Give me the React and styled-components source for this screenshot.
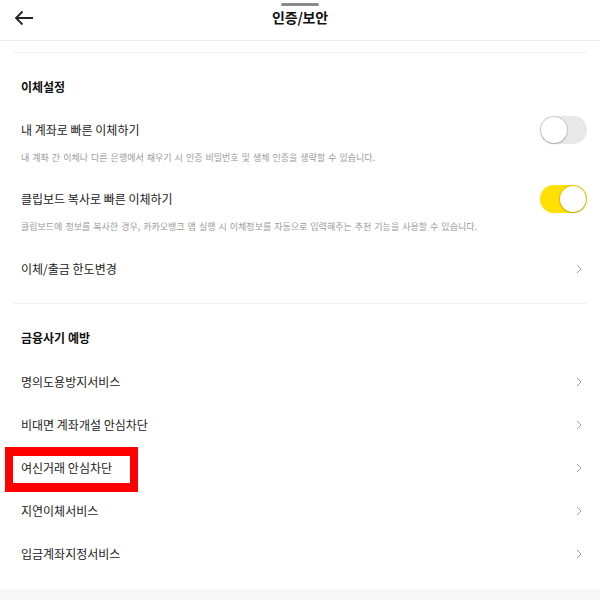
import React from "react";
import styled, { createGlobalStyle } from "styled-components";

const Global = createGlobalStyle`
  html, body { margin: 0; padding: 0; background: #fff; }
  body { font-family: "Noto Sans CJK KR", "Noto Sans", sans-serif; color: #222; }
  * { box-sizing: border-box; }
`;

const Page = styled.div`
  width: 600px;
  height: 600px;
  overflow: hidden;
  display: flex;
  flex-direction: column;
  background: #fff;
`;

const Header = styled.header`
  position: relative;
  height: 41px;
  flex: none;
  display: flex;
  align-items: center;
  justify-content: center;
  border-bottom: 1px solid #eeeeee;
`;

const Handle = styled.div`
  position: absolute;
  top: 3px;
  left: 281px;
  width: 38px;
  height: 3px;
  border-radius: 2px;
  background: #8a8a8a;
`;

const BackButton = styled.button`
  position: absolute;
  left: 12px;
  top: 7px;
  width: 24px;
  height: 22px;
  padding: 0;
  border: 0;
  background: none;
  display: flex;
  align-items: center;
  justify-content: center;
`;

const Title = styled.h1`
  margin: 0;
  margin-top: -6px;
  font-size: 14px;
  font-weight: 700;
  color: #111;
  letter-spacing: -0.2px;
`;

const Content = styled.main`
  flex: 1;
  padding: 0 13px;
`;

const Divider = styled.hr`
  margin: ${(p) => p.$top}px 0 0;
  border: 0;
  height: 1px;
  background: #f0f0f0;
`;

const SectionTitle = styled.h2`
  margin: 0;
  padding: 20px 8px 0;
  height: 48px;
  line-height: 28px;
  font-size: 12px;
  font-weight: 700;
  color: #111;
`;

const ToggleBlock = styled.div`
  padding-top: ${(p) => p.$top}px;
`;

const ToggleRow = styled.div`
  height: 28px;
  display: flex;
  align-items: center;
  justify-content: space-between;
  padding-left: 8px;
`;

const Label = styled.span`
  font-size: 12px;
  color: #222;
  line-height: 20px;
`;

const Desc = styled.p`
  margin: 7px 0 0;
  padding-left: 8px;
  font-size: 9px;
  line-height: 14px;
  word-spacing: 1px;
  color: #9a9a9a;
`;

const Track = styled.div`
  position: relative;
  width: 47px;
  height: 28px;
  border-radius: 14px;
  background: ${(p) => (p.$on ? "#ffe000" : "#e8e8e8")};
  flex: none;
`;

const Knob = styled.div`
  position: absolute;
  top: 1px;
  left: ${(p) => (p.$on ? "20px" : "1px")};
  width: 26px;
  height: 26px;
  border-radius: 50%;
  background: #fff;
  box-shadow: 0 0 0 1px rgba(0, 0, 0, 0.1), 0 1px 2px rgba(0, 0, 0, 0.2);
`;

const List = styled.div`
  margin-top: ${(p) => p.$top}px;
`;

const LinkRow = styled.div`
  position: relative;
  height: 43px;
  display: flex;
  align-items: center;
  justify-content: space-between;
  padding: 0 4px 0 8px;
`;

const Highlight = styled.div`
  position: absolute;
  left: -8px;
  top: 1px;
  width: 133px;
  height: 45px;
  border-style: solid;
  border-color: #ff0000;
  border-width: 9px 8px;
  pointer-events: none;
`;

const Footer = styled.div`
  height: 11px;
  background: #f7f7f7;
  flex: none;
`;

const Chevron = () => (
  <svg width="8" height="10" viewBox="0 0 8 10">
    <path d="M2 1 L6 5 L2 9" fill="none" stroke="#a0a0a0" strokeWidth="1" />
  </svg>
);

const Toggle = ({ on }) => (
  <Track $on={on}>
    <Knob $on={on} />
  </Track>
);

const ToggleItem = ({ label, desc, on, top }) => (
  <ToggleBlock $top={top}>
    <ToggleRow>
      <Label>{label}</Label>
      <Toggle on={on} />
    </ToggleRow>
    <Desc>{desc}</Desc>
  </ToggleBlock>
);

const LinkItem = ({ label, highlighted }) => (
  <LinkRow>
    <Label>{label}</Label>
    <Chevron />
    {highlighted && <Highlight />}
  </LinkRow>
);

export default function App() {
  return (
    <Page>
      <Global />
      <Header>
        <Handle />
        <BackButton aria-label="뒤로">
          <svg width="20" height="16" viewBox="0 0 20 16">
            <path
              d="M19 8 H2 M8.5 1.5 L2 8 L8.5 14.5"
              fill="none"
              stroke="#222"
              strokeWidth="1.8"
            />
          </svg>
        </BackButton>
        <Title>인증/보안</Title>
      </Header>
      <Content>
        <Divider $top={11} />
        <SectionTitle>이체설정</SectionTitle>
        <ToggleItem
          top={15}
          label="내 계좌로 빠른 이체하기"
          desc="내 계좌 간 이체나 다른 은행에서 채우기 시 인증 비밀번호 및 생체 인증을 생략할 수 있습니다."
          on={false}
        />
        <ToggleItem
          top={20}
          label="클립보드 복사로 빠른 이체하기"
          desc="클립보드에 정보를 복사한 경우, 카카오뱅크 앱 실행 시 이체정보를 자동으로 입력해주는 추천 기능을 사용할 수 있습니다."
          on={true}
        />
        <List $top={13}>
          <LinkItem label="이체/출금 한도변경" />
        </List>
        <Divider $top={13} />
        <SectionTitle>금융사기 예방</SectionTitle>
        <List $top={8}>
          <LinkItem label="명의도용방지서비스" />
          <LinkItem label="비대면 계좌개설 안심차단" />
          <LinkItem label="여신거래 안심차단" highlighted />
          <LinkItem label="지연이체서비스" />
          <LinkItem label="입금계좌지정서비스" />
        </List>
      </Content>
      <Footer />
    </Page>
  );
}
